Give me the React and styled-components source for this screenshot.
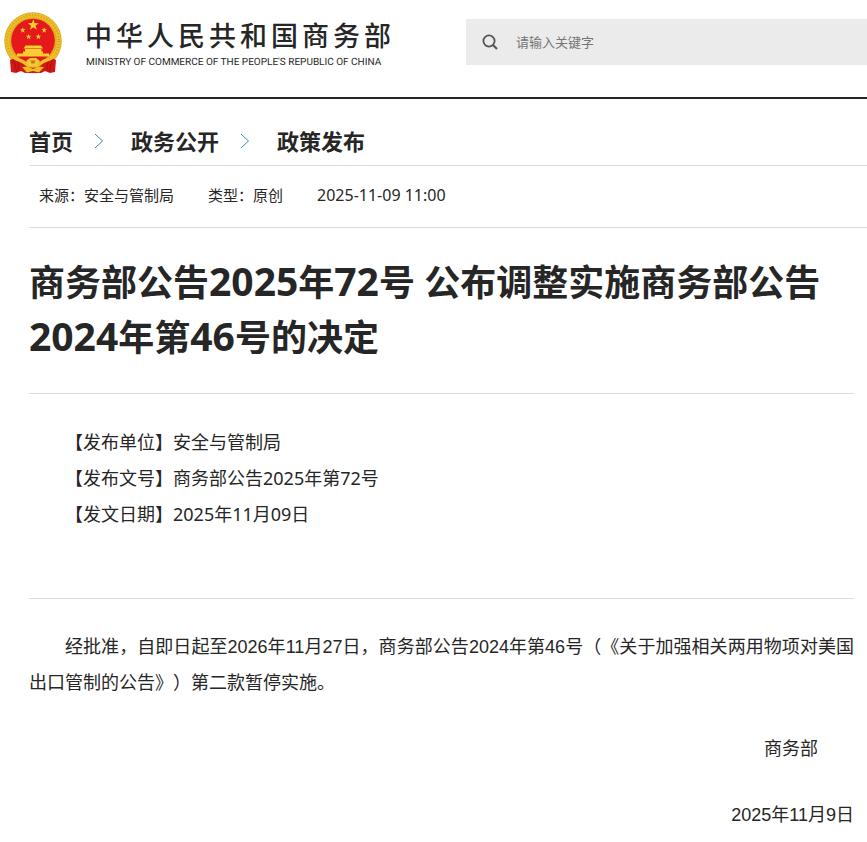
import React, { useState } from "react";
import styled, { createGlobalStyle } from "styled-components";

const star = (cx, cy, r) =>
  Array.from({ length: 10 }, (_, i) => {
    const a = (Math.PI / 5) * i - Math.PI / 2;
    const d = i % 2 ? r * 0.4 : r;
    return `${cx + d * Math.cos(a)},${cy + d * Math.sin(a)}`;
  }).join(" ");

const Emblem = () => (
  <svg width="60" height="64" viewBox="0 0 60 64" aria-hidden="true">
    <circle cx="29" cy="30" r="28.8" fill="#dfab22" />
    <circle cx="29" cy="30" r="25.8" fill="none" stroke="#edc02c" strokeWidth="4" />
    <circle
      cx="29"
      cy="30"
      r="25.8"
      fill="none"
      stroke="#d39c1b"
      strokeWidth="2"
      strokeDasharray="1 2"
    />
    <circle cx="29" cy="29.5" r="21.8" fill="#e5191b" />
    <path
      d="M6 49l6-3 17 6 17-6 6 3-1 12-5 1-5-2-4 2H21l-4-2-5 2-5-1z"
      fill="#d41617"
    />
    <path
      d="M10 50l3 11M48 50l-3 11M14 50l1 9M44 50l-1 9"
      stroke="#a81213"
      fill="none"
    />
    <g fill="#f7d02f">
      <polygon points={star(29.3, 14, 5.8)} />
      <polygon points={star(18.8, 19.2, 3)} />
      <polygon points={star(40.2, 19.2, 3)} />
      <polygon points={star(24.6, 25.7, 3)} />
      <polygon points={star(34.4, 25.7, 3)} />
      <path d="M21.500 34.500h15.500l2 3H19.500z" />
      <path d="M21 38h16.500v3H21z" />
      <path d="M19 40.500h20v2h6v3H13v-3h6z" />
    </g>
    <path
      d="M8 44c4 6 9 4 13 8 3 3 5 3 8 3s5 0 8-3c4-4 9-2 13-8"
      stroke="#eebd2b"
      strokeWidth="3.4"
      fill="none"
    />
    <path d="M22 50l4-3h6l4 3-3 5h-8z" fill="#f3c934" />
    <path d="M26.500 49.500h5l-1 3h-3z" fill="#cf7a17" />
    <path d="M18 56l6-.5 5 2.500 5-2.500 6 .5-5 5.500-6-1.500-6 1.500z" fill="#eebc24" />
  </svg>
);

const SearchIcon = () => (
  <svg width="16" height="16" viewBox="0 0 16 16" aria-hidden="true">
    <circle
      cx="7"
      cy="7"
      r="5.6"
      fill="none"
      stroke="#555"
      strokeWidth="1.8"
    />
    <path d="M11 11l4 4" stroke="#555" strokeWidth="2.2" />
  </svg>
);

const Arrow = () => (
  <svg width="10" height="16" viewBox="0 0 10 16" aria-hidden="true">
    <path d="M1 1l7.500 7L1 15" fill="none" stroke="#3c86b4" />
  </svg>
);

const App = () => {
  const [keyword, setKeyword] = useState("");

  return (
    <>
      <GlobalStyle />
      <Header>
        <Brand href="#">
          <Emblem />
          <BrandText>
            <BrandName>中华人民共和国商务部</BrandName>
            <BrandSub>
              MINISTRY OF COMMERCE OF THE PEOPLE'S REPUBLIC OF CHINA
            </BrandSub>
          </BrandText>
        </Brand>
        <Search role="search" onSubmit={(e) => e.preventDefault()}>
          <SearchButton type="submit" aria-label="搜索">
            <SearchIcon />
          </SearchButton>
          <SearchInput
            aria-label="请输入关键字"
            placeholder="请输入关键字"
            value={keyword}
            onChange={(e) => setKeyword(e.target.value)}
          />
        </Search>
      </Header>
      <Main lang="zh-CN">
        <Breadcrumb>
          <Crumb href="#">首页</Crumb>
          <Arrow />
          <Crumb href="#">政务公开</Crumb>
          <Arrow />
          <Crumb href="#">政策发布</Crumb>
        </Breadcrumb>
        <Meta>
          <span>来源：安全与管制局</span>
          <span>类型：原创</span>
          <MetaTime>2025-11-09 11:00</MetaTime>
        </Meta>
        <Article>
          <Title>
            商务部公告<Num>2025</Num>年<Num>72</Num>号{" "}
            公布调整实施商务部公告<Num>2024</Num>年第<Num>46</Num>号的决定
          </Title>
          <Info>
            <InfoRow>【发布单位】安全与管制局</InfoRow>
            <InfoRow>【发布文号】商务部公告2025年第72号</InfoRow>
            <InfoRow>【发文日期】2025年11月09日</InfoRow>
          </Info>
          <Body>
            <Paragraph>
              经批准，自即日起至2026年11月27日，商务部公告2024年第46号（《关于加强相关两用物项对美国出口管制的公告》）第二款暂停实施。
            </Paragraph>
            <Signature $inset>商务部</Signature>
            <Signature>2025年11月9日</Signature>
          </Body>
        </Article>
      </Main>
    </>
  );
};

const GlobalStyle = createGlobalStyle`
  * {
    box-sizing: border-box;
  }
  body {
    margin: 0;
    background: #fff;
    color: #262626;
    font-family: "Noto Sans", "Noto Sans CJK SC", sans-serif;
    text-spacing-trim: space-all;
  }
  a {
    color: inherit;
    text-decoration: none;
  }
`;

const Header = styled.header`
  display: grid;
  grid-template-columns: 466px 1fr;
  align-items: start;
  padding-bottom: 22px;
  border-bottom: 2px solid #262626;
`;

const Brand = styled.a`
  display: flex;
  gap: 21px;
  padding: 11px 0 0 4px;
`;

const BrandText = styled.span`
  display: flex;
  flex-direction: column;
  padding-top: 4px;
  white-space: nowrap;
`;

const BrandName = styled.span`
  font-family: "Noto Sans CJK SC", sans-serif;
  font-size: 27px;
  font-weight: 500;
  line-height: 40px;
  letter-spacing: 4px;
`;

const BrandSub = styled.span`
  padding-left: 1px;
  font-family: Roboto, "Liberation Sans", sans-serif;
  font-size: 10px;
  line-height: 16px;
  text-rendering: geometricPrecision;
`;

const Search = styled.form`
  display: flex;
  align-items: center;
  height: 46px;
  margin-top: 19px;
  background: #ebebeb;
`;

const SearchButton = styled.button`
  display: flex;
  padding: 0 18px 0 16px;
  border: none;
  background: transparent;
  cursor: pointer;
`;

const SearchInput = styled.input`
  flex: 1;
  min-width: 0;
  height: 46px;
  padding: 0;
  border: none;
  outline: none;
  background: transparent;
  font-family: inherit;
  font-size: 13px;
  &::placeholder {
    color: #757575;
  }
`;

const Main = styled.main`
  padding-left: 29px;
`;

const Breadcrumb = styled.nav`
  display: flex;
  align-items: center;
  gap: 21px;
  padding: 26px 0 8px;
  border-bottom: 1px solid #dcdcdc;
  & svg {
    margin-right: 6px;
  }
`;

const Crumb = styled.a`
  font-size: 22px;
  font-weight: bold;
  line-height: 32px;
`;

const Meta = styled.div`
  display: flex;
  gap: 34px;
  padding: 14px 10px 17px;
  border-bottom: 1px solid #dcdcdc;
  font-size: 15px;
  line-height: 30px;
`;

const MetaTime = styled.time`
  font-size: 16px;
`;

const Article = styled.article`
  padding-right: 13px;
`;

const Title = styled.h1`
  margin: 0;
  padding: 27px 0 28px;
  border-bottom: 1px solid #dcdcdc;
  font-size: 36px;
  line-height: 55px;
`;

/* digits sit a little larger than the characters around them */
const Num = styled.span`
  font-size: 39px;
  line-height: 1;
`;

const Info = styled.div`
  padding: 30px 0 66px;
  border-bottom: 1px solid #dcdcdc;
`;

const InfoRow = styled.p`
  margin: 0;
  text-indent: 2em;
  font-size: 18px;
  line-height: 36px;
`;

const Body = styled.div`
  padding-top: 30px;
  font-family: "Liberation Sans", Arial, "Noto Sans CJK SC", sans-serif;
  font-size: 18px;
  line-height: 36px;
`;

const Paragraph = styled.p`
  margin: 0;
  text-indent: 2em;
  text-align: justify;
`;

const Signature = styled.p`
  margin: 30px 0 0;
  padding-right: ${(props) => (props.$inset ? "36px" : "0")};
  text-align: right;
`;

export default App;
